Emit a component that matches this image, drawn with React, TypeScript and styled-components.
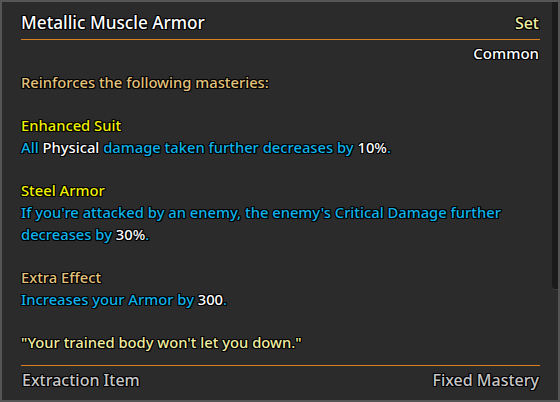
import styled, { createGlobalStyle } from "styled-components";

const GlobalStyle = createGlobalStyle`
	html, body {
		margin: 0;
		padding: 0;
		background: #2b2b2b;
	}
	body {
		font-family: "Noto Sans", "Open Sans", sans-serif;
	}
`;

const outline = `
	text-shadow: -1px -1px 0 #000, 1px -1px 0 #000, -1px 1px 0 #000, 1px 1px 0 #000,
		0 1px 0 #000, 0 -1px 0 #000, 1px 0 0 #000, -1px 0 0 #000;
`;

const Panel = styled.div`
	position: relative;
	box-sizing: border-box;
	width: 560px;
	height: 402px;
	border: 2px solid #555555;
	background: #2b2b2b;
	padding: 0 18px 0 19px;
	display: flex;
	flex-direction: column;
	overflow: hidden;
`;

const Scrollbar = styled.div`
	position: absolute;
	top: 0;
	right: 0;
	width: 6px;
	height: 287px;
	background: #1b1b1b;
	border-bottom-left-radius: 4px;
	border-bottom: 1px solid #3a3a3a;
`;

const Header = styled.div`
	display: flex;
	justify-content: space-between;
	align-items: flex-end;
	height: 38px;
	border-bottom: 1px solid #d9801e;
	padding: 0 1px 0 0;
	box-sizing: border-box;
`;

const Title = styled.div<{ $color: string; $size: number }>`
	color: ${(p) => p.$color};
	font-size: ${(p) => p.$size}px;
	font-weight: 500;
	line-height: 26px;
	padding-bottom: 3px;
	${outline}
`;

const Rarity = styled.div`
	align-self: flex-end;
	color: #ffffff;
	font-size: 15px;
	font-weight: 500;
	line-height: 26px;
	padding-right: 1px;
	${outline}
`;

const Body = styled.div`
	flex: 1;
	padding-top: 6px;
	font-size: 14.75px;
	font-weight: 500;
	line-height: 21.7px;
	${outline}
`;

const Line = styled.div<{ $color?: string }>`
	min-height: 21.7px;
	color: ${(p) => p.$color ?? "#0fb4ea"};
`;

const Hl = styled.span<{ $color?: string }>`
	color: ${(p) => p.$color ?? "#ffffff"};
`;

const Footer = styled.div`
	display: flex;
	justify-content: space-between;
	border-top: 1px solid #d9801e;
	height: 35px;
	padding: 3px 1px 0 1px;
	box-sizing: border-box;
	color: #c8c8c8;
	font-size: 16px;
	font-weight: 500;
	line-height: 22px;
	${outline}
`;

const TAN = "#e3c27c";
const YELLOW = "#f2f200";
const PALE = "#f2eea0";

export default function App() {
	return (
		<>
			<GlobalStyle />
			<Panel>
				<Scrollbar />
				<Header>
					<Title $color="#ffffff" $size={17.2}>Metallic Muscle Armor</Title>
					<Title $color={PALE} $size={16}>Set</Title>
				</Header>
				<Rarity>Common</Rarity>
				<Body>
					<Line $color={TAN}>Reinforces the following masteries:</Line>
					<Line />
					<Line $color={YELLOW}>Enhanced Suit</Line>
					<Line>
						All <Hl>Physical</Hl> damage taken further decreases by <Hl>10%</Hl>.
					</Line>
					<Line />
					<Line $color={YELLOW}>Steel Armor</Line>
					<Line>
						If you're attacked by an enemy, the enemy's Critical Damage further decreases by <Hl>30%</Hl>.
					</Line>
					<Line />
					<Line $color={TAN}>Extra Effect</Line>
					<Line>
						Increases your Armor by <Hl>300</Hl>.
					</Line>
					<Line />
					<Line $color={PALE}>"Your trained body won't let you down."</Line>
				</Body>
				<Footer>
					<span>Extraction Item</span>
					<span>Fixed Mastery</span>
				</Footer>
			</Panel>
		</>
	);
}
